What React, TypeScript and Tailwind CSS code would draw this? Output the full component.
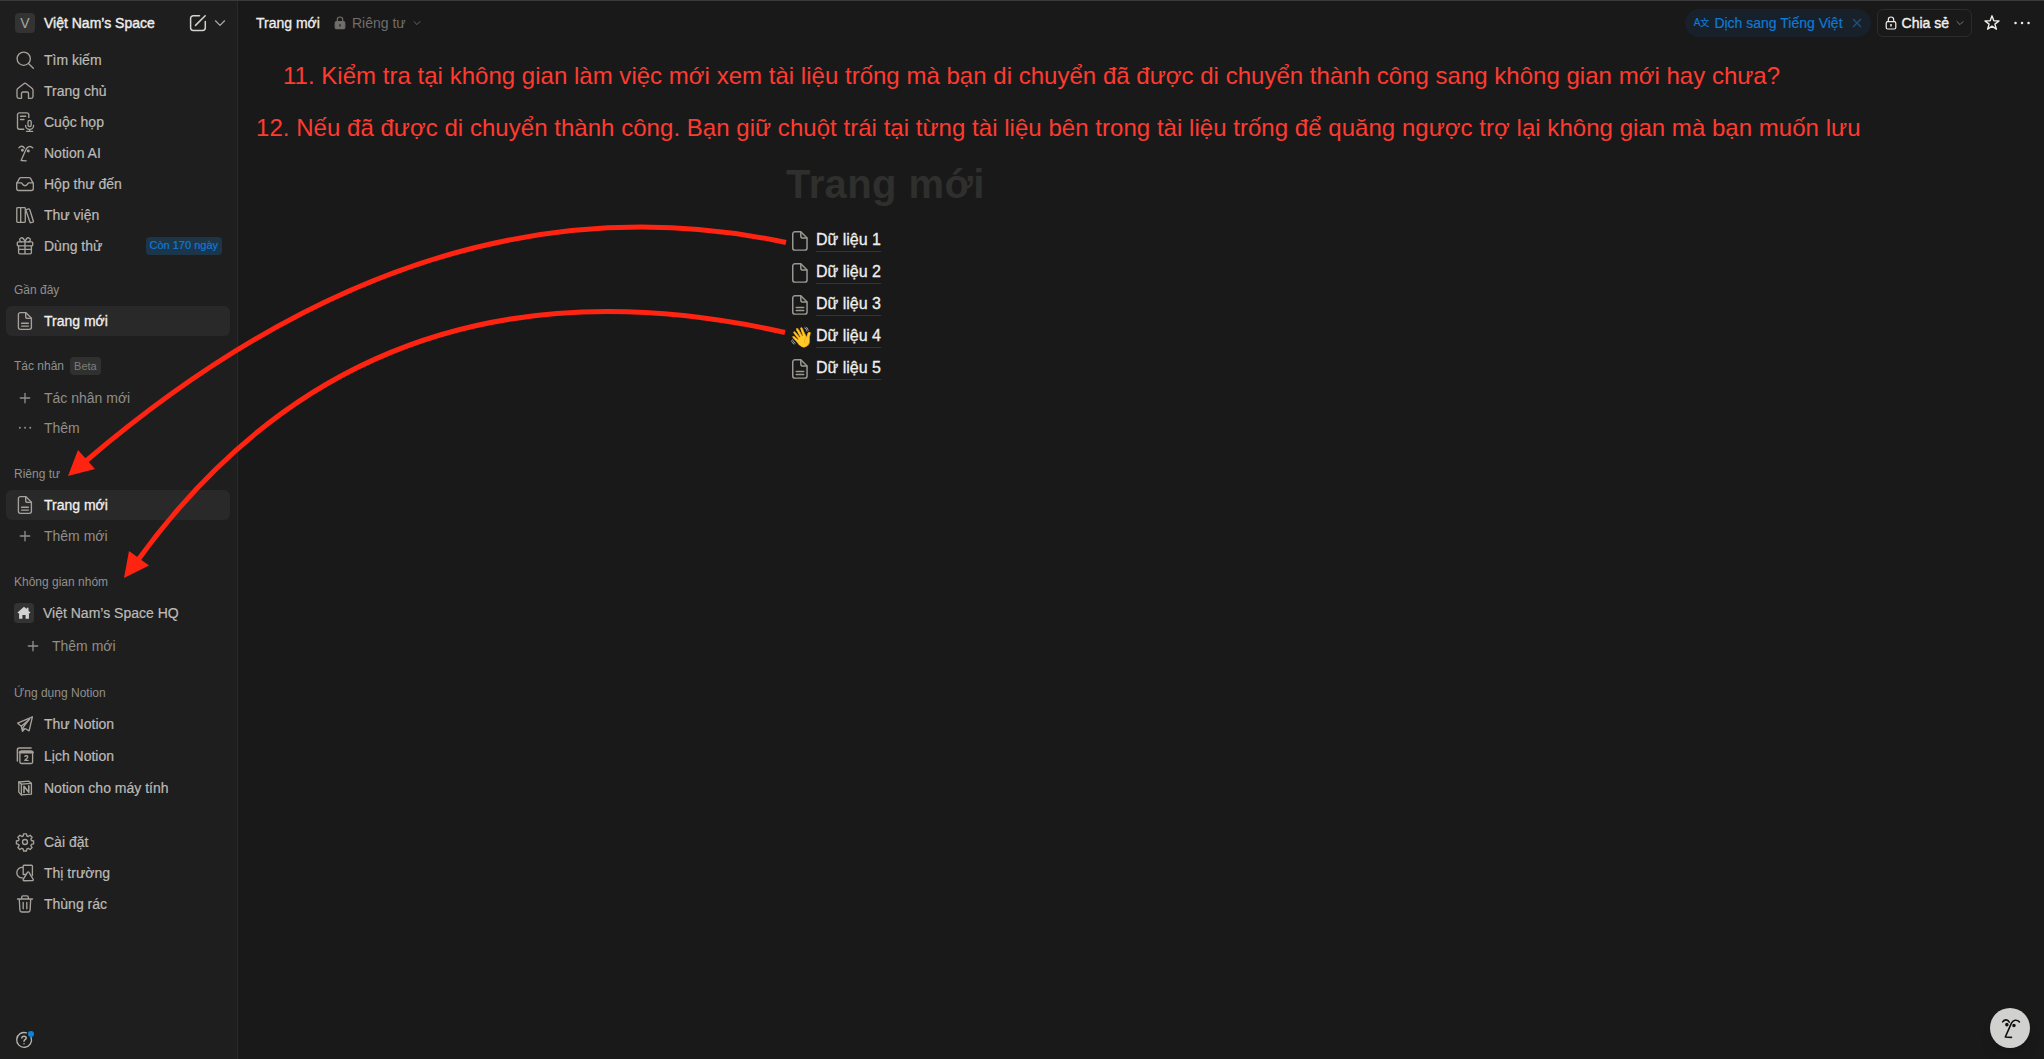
import React from "react";

type IconProps = { children: React.ReactNode; className?: string };

const Icon: React.FC<IconProps> = ({ children, className = "w-5 h-5" }) => (
  <svg
    viewBox="0 0 20 20"
    className={`shrink-0 ${className}`}
    fill="none"
    stroke="currentColor"
    strokeWidth="1.35"
    strokeLinecap="round"
    strokeLinejoin="round"
  >
    {children}
  </svg>
);

const PageIcon: React.FC<{ lines?: boolean; className?: string }> = ({ lines, className }) => (
  <Icon className={className}>
    <path d="M5.4 1.6h5.3l5.7 5.7v9a2 2 0 0 1-2 2H5.4a2 2 0 0 1-2-2V3.6a2 2 0 0 1 2-2Z" />
    <path d="M10.7 1.8v3.6a1.9 1.9 0 0 0 1.9 1.9h3.6" />
    {lines && <path d="M6.6 12.2h6.8M6.6 15.1h6.8" />}
  </Icon>
);

const PlusIcon = () => (
  <Icon><path d="M10 5.3v9.4M5.3 10h9.4" /></Icon>
);

const FaceIcon: React.FC<{ className?: string }> = ({ className }) => (
  <Icon className={className}>
    <path d="M3.9 4.9c1.5-2.2 4.2-2.3 5.5.2M17.8 4.9c-2.2-2.3-5.1-1.6-6.6 1L6.1 17.5l5.1.3" />
    <circle cx="7.4" cy="7.2" r=".8" fill="currentColor" />
    <circle cx="13.3" cy="7.9" r=".8" fill="currentColor" />
  </Icon>
);

const Chevron: React.FC<{ className?: string }> = ({ className }) => (
  <svg viewBox="0 0 10 10" className={`shrink-0 ${className}`} fill="none" stroke="currentColor" strokeWidth="1.1" strokeLinecap="round" strokeLinejoin="round">
    <path d="M1.2 3.2 5 7l3.8-3.8" />
  </svg>
);

const mainItems = [
  {
    label: "Tìm kiếm",
    icon: <Icon><circle cx="8.7" cy="8.7" r="6.6" /><path d="m13.5 13.5 4.8 4.8" /></Icon>,
  },
  {
    label: "Trang chủ",
    icon: (
      <Icon>
        <path d="M2 9.2c0-.7.3-1.3.8-1.7l6-4.8a2 2 0 0 1 2.4 0l6 4.8c.5.4.8 1 .8 1.7v6.3a1.8 1.8 0 0 1-1.8 1.8h-2.7v-5a1.3 1.3 0 0 0-1.3-1.3H7.8a1.3 1.3 0 0 0-1.3 1.3v5H3.8A1.8 1.8 0 0 1 2 15.5Z" />
      </Icon>
    ),
  },
  {
    label: "Cuộc họp",
    icon: (
      <Icon>
        <path d="M8.8 17.2H4.5a2 2 0 0 1-2-2V2.8a2 2 0 0 1 2-2h7.3a2 2 0 0 1 2 2v2.7M5.5 4.2h5.2M5.5 7.5h3.5" />
        <rect x="13" y="8.3" width="3.2" height="6.2" rx="1.6" />
        <path d="M10.6 13.4a4 4 0 0 0 8 0M14.6 17.4v2M11.6 19.4h6" />
      </Icon>
    ),
  },
  { label: "Notion AI", icon: <FaceIcon /> },
  {
    label: "Hộp thư đến",
    icon: (
      <Icon>
        <path d="M1.7 9.5 4.3 4.6a2 2 0 0 1 1.8-1h7.8a2 2 0 0 1 1.8 1l2.6 4.9v5a2 2 0 0 1-2 2H3.7a2 2 0 0 1-2-2Z" />
        <path d="M1.7 8.8h4.7c.8 0 .9 2.9 3.6 2.9s2.8-2.9 3.6-2.9h4.7" />
      </Icon>
    ),
  },
  {
    label: "Thư viện",
    icon: (
      <Icon>
        <path d="M1.8 3.4a.8.8 0 0 1 .8-.8h2.3a.8.8 0 0 1 .8.8v13.2a.8.8 0 0 1-.8.8H2.6a.8.8 0 0 1-.8-.8ZM5.7 2.6h3.8a.8.8 0 0 1 .8.8v13.2a.8.8 0 0 1-.8.8H5.5" />
        <path d="m11.4 4.6 2.3-.7a.8.8 0 0 1 1 .6l3.7 11.7a.8.8 0 0 1-.5 1l-1.9.5a.8.8 0 0 1-1-.5L11 5.5a.8.8 0 0 1 .4-.9Z" />
      </Icon>
    ),
  },
  {
    label: "Dùng thử",
    badge: "Còn 170 ngày",
    icon: (
      <Icon>
        <rect x="2.3" y="5.8" width="15.4" height="4" rx=".9" />
        <path d="M3.6 9.8v6.8a1.3 1.3 0 0 0 1.3 1.3h10.2a1.3 1.3 0 0 0 1.3-1.3V9.8M10 5.8v12.1M10 5.8C8.8 2.3 7.500 1.6 6.2 1.8c-2.2.4-2 3.7.3 4M10 5.8c1.2-3.5 2.5-4.2 3.8-4 2.2.4 2 3.7-.3 4M3.800 13.400h12.400" />
      </Icon>
    ),
  },
];

const appItems = [
  {
    label: "Thư Notion",
    icon: (
      <Icon>
        <path d="M17.4 2.8 2.7 9.2l3.6 3.1 1.2 5 2.500-2.800 4.100 2.300ZM6.3 12.3l8.4-7.4M7.5 17.3l.8-4.2 6.4-8.2" />
      </Icon>
    ),
  },
  {
    label: "Lịch Notion",
    icon: (
      <Icon>
        <path d="M2.4 15V3.8a1.8 1.8 0 0 1 1.8-1.8h11.9" strokeWidth="1.5" />
        <rect x="4.9" y="4.8" width="12.7" height="12.7" rx="1.6" />
        <path d="M5 6.2h12.5" strokeWidth="2.4" />
        <path d="M9.8 10.3c.8-.9 3-.7 3 .6 0 1.2-2.1 2-3 3.5h3.2" />
      </Icon>
    ),
  },
  {
    label: "Notion cho máy tính",
    icon: (
      <Icon>
        <path d="M3.8 4 13.9 3.2l2.500 2v11l-10.100.7-2.500-2.800Z" />
        <path d="M3.8 4 6.4 6.1l10-.7M6.4 6.1v10.600" />
        <path d="M9 14.500V8.300l4.800 6V7.900" strokeWidth="1.6" />
      </Icon>
    ),
  },
];

const footerItems = [
  {
    label: "Cài đặt",
    icon: (
      <Icon>
        <circle cx="10" cy="10" r="2.5" />
        <path d="M8.6 1.8h2.8l.5 2.2 1.3.5 1.9-1.2 2 2-1.2 1.9.5 1.3 2.2.5v2.8l-2.2.5-.5 1.3 1.2 1.9-2 2-1.9-1.2-1.3.5-.5 2.2H8.6l-.5-2.2-1.3-.5-1.9 1.2-2-2 1.2-1.9-.5-1.3-2.2-.5V9l2.2-.5.5-1.3-1.2-1.9 2-2 1.9 1.2 1.3-.5Z" />
      </Icon>
    ),
  },
  {
    label: "Thị trường",
    icon: (
      <Icon>
        <path d="M7.6 14.9a5.300 5.300 0 1 1 .4-10.500M8.200 11.500V3.100a.9.9 0 0 1 .9-.9h7.400a.9.9 0 0 1 .9.9v9.400M8.200 11.500h2.700" />
        <path d="M12.400 9.400a.9.9 0 0 1 1.6 0l4.200 7a.9.9 0 0 1-.8 1.300H9a.9.9 0 0 1-.8-1.300Z" />
      </Icon>
    ),
  },
  {
    label: "Thùng rác",
    icon: (
      <Icon>
        <path d="M2.5 5h15M6.7 5V3.2a1.300 1.300 0 0 1 1.3-1.300h4a1.300 1.300 0 0 1 1.300 1.300V5M4.300 5l.6 11.300a1.800 1.800 0 0 0 1.800 1.700h6.600a1.800 1.800 0 0 0 1.800-1.700L15.700 5M8.200 8.300v6.400M11.800 8.300v6.400" />
      </Icon>
    ),
  },
];

const documents = [
  { label: "Dữ liệu 1", kind: "empty" },
  { label: "Dữ liệu 2", kind: "empty" },
  { label: "Dữ liệu 3", kind: "text" },
  { label: "Dữ liệu 4", kind: "wave" },
  { label: "Dữ liệu 5", kind: "text" },
];

type RowProps = {
  label: string;
  icon: React.ReactNode;
  badge?: string;
  active?: boolean;
  muted?: boolean;
  className?: string;
};

const Row: React.FC<RowProps> = ({ label, icon, badge, active, muted, className = "h-[31px] pl-[9px]" }) => (
  <div
    className={`flex items-center gap-[9px] rounded-md text-sm ${className} ${
      active ? "bg-[#292929] text-[#f0efed] [-webkit-text-stroke:0.3px]" : muted ? "text-[#8f8e8b]" : "text-[#bcbab6] [-webkit-text-stroke:0.2px]"
    }`}
  >
    <span className={`flex ${muted ? "" : "text-[#a6a29b]"}`}>{icon}</span>
    <span className="whitespace-nowrap">{label}</span>
    {badge && (
      <span className="mr-2 ml-auto h-[18px] rounded bg-[#1d3549] px-1 text-[11px] leading-[17px] whitespace-nowrap text-[#0d7ad6]">{badge}</span>
    )}
  </div>
);

const SectionLabel: React.FC<{ children: React.ReactNode; className?: string }> = ({ children, className }) => (
  <div className={`flex h-5 items-center pl-2 text-xs text-[#91908d] ${className}`}>{children}</div>
);

const Sidebar = () => (
  <aside className="flex w-[238px] shrink-0 flex-col border-r border-[#2a2a2a] bg-[#1e1e1e] pt-[7px] pr-[7px] pl-1.5">
    <div className="flex h-[30px] items-center pl-[9px] text-sm">
      <span className="flex h-5 w-5 items-center justify-center rounded bg-[#333] text-[#a7a6a3]">V</span>
      <span className="ml-[9px] text-[#eeedeb] [-webkit-text-stroke:0.4px]">Việt Nam’s Space</span>
      <span className="ml-auto flex items-center gap-1.5 pr-1 text-[#d4d3cf]">
        <Icon className="h-5 w-5">
          <path d="M11.5 2.7H5.3a2.700 2.700 0 0 0-2.700 2.700v9.300a2.700 2.700 0 0 0 2.700 2.700h9.300a2.700 2.700 0 0 0 2.700-2.700V8.500M7.500 12.400l9.700-9.700" strokeWidth="1.5" />
        </Icon>
        <Chevron className="h-3 w-3 text-[#a6a5a1]" />
      </span>
    </div>

    <nav className="mt-1.5">
      {mainItems.map((item) => (
        <Row key={item.label} {...item} />
      ))}
    </nav>

    <SectionLabel className="mt-[19px]">Gần đây</SectionLabel>
    <Row label="Trang mới" icon={<PageIcon lines />} active className="mt-1.5 h-[30px] pl-[9px]" />

    <SectionLabel className="mt-5">
      Tác nhân
      <span className="ml-1.5 rounded bg-[#30302f] px-1 text-[11px] leading-[18px] text-[#7f7e7b]">Beta</span>
    </SectionLabel>
    <Row label="Tác nhân mới" icon={<PlusIcon />} muted className="mt-[7px] h-[30px] pl-[9px]" />
    <Row
      label="Thêm"
      muted
      className="h-[30px] pl-[9px]"
      icon={
        <Icon><path d="M4.8 9.8h.1M10 9.8h.1M15.2 9.8h.1" strokeWidth="1.9" /></Icon>
      }
    />

    <SectionLabel className="mt-[21px]">Riêng tư</SectionLabel>
    <Row label="Trang mới" icon={<PageIcon lines />} active className="mt-1.5 h-[30px] pl-[9px]" />
    <Row label="Thêm mới" icon={<PlusIcon />} muted />

    <SectionLabel className="mt-[21px]">Không gian nhóm</SectionLabel>
    <Row
      label="Việt Nam’s Space HQ"
      className="mt-[5px] h-[31px] pl-2"
      icon={
        <span className="flex h-5 w-5 items-center justify-center rounded bg-[#333] text-[#d3d3d3]">
          <svg viewBox="0 0 14 14" className="h-3.5 w-3.5" fill="currentColor">
            <path d="M7 .8 9.6 3.1V1.7h1.9v3.1L13.5 6.6l-.8.9-.8-.6v5.900H8.600V9H5.400v3.800H2.100V6.900l-.8.6-.8-.9Z" />
          </svg>
        </span>
      }
    />
    <Row label="Thêm mới" icon={<PlusIcon />} muted className="mt-px h-[33px] pl-[17px]" />

    <SectionLabel className="mt-[21px]">Ứng dụng Notion</SectionLabel>
    <div className="mt-[5px]">
      {appItems.map((item) => (
        <Row key={item.label} {...item} className="h-8 pl-[9px]" />
      ))}
    </div>

    <div className="mt-[22px]">
      {footerItems.map((item) => (
        <Row key={item.label} {...item} />
      ))}
    </div>

    <div className="relative mt-auto mb-[9px] ml-2 h-5 w-5 text-[#b5b3af]">
      <Icon>
        <path d="M12.5 2.900A7.400 7.400 0 1 0 17.100 7.500" />
        <path d="M7.800 7.900c.3-2.300 4.400-2.300 4.400.1 0 1.600-2.200 1.700-2.200 3.300M10 13.700v.1" strokeWidth="1.5" />
      </Icon>
      <span className="absolute top-px right-0 h-1.5 w-1.5 rounded-full bg-[#0a84e0]" />
    </div>
  </aside>
);

const TopBar = () => (
  <header className="flex h-11 shrink-0 items-center pr-3 pl-[18px] text-sm">
    <span className="text-[#f0efed] [-webkit-text-stroke:0.3px]">Trang mới</span>
    <span className="ml-3.5 flex items-center text-[#6f6e6b]">
      <svg viewBox="0 0 12 14" className="h-3.5 w-3" fill="none" stroke="currentColor" strokeWidth="1.2">
        <path d="M3.3 6V3.7a2.700 2.700 0 0 1 5.400 0V6" />
        <path d="M2.700 5.700h6.600a1.500 1.500 0 0 1 1.500 1.500v4a1.500 1.500 0 0 1-1.500 1.500H2.700a1.500 1.500 0 0 1-1.500-1.500v-4a1.500 1.500 0 0 1 1.500-1.500Z" fill="currentColor" />
        <path d="M6 8.200v2.300" stroke="#191919" />
      </svg>
      <span className="ml-1.5">Riêng tư</span>
      <Chevron className="ml-[7px] h-2 w-2" />
    </span>

    <div className="ml-auto flex items-center">
      <div className="flex h-7 items-center rounded-full bg-[#18212a] pr-[9px] pb-px pl-[9px] text-[#0d7ad6]">
        <span className="flex items-baseline font-['Liberation_Sans','Noto_Sans_CJK_SC',sans-serif] text-[10px] leading-none [-webkit-text-stroke:0.2px]">
          A<span className="text-[9px]">文</span>
        </span>
        <span className="ml-[5px] [-webkit-text-stroke:0.2px]">Dịch sang Tiếng Việt</span>
        <svg viewBox="0 0 10 10" className="ml-[9px] h-2.5 w-2.5 text-[#1e527b]" stroke="currentColor" strokeWidth="1.3">
          <path d="m1 1 8 8M9 1 1 9" />
        </svg>
      </div>
      <div className="ml-1.5 flex h-7 items-center rounded-md border border-[#2c2c2c] pr-[7px] pl-[7px] text-[#f0efed]">
        <svg viewBox="0 0 12 14" className="h-3.5 w-3" fill="none" stroke="currentColor" strokeWidth="1.2">
          <path d="M3.300 5.700V3.700a2.700 2.700 0 0 1 5.400 0v2" />
          <rect x="1.200" y="5.700" width="9.600" height="7.300" rx="1.500" />
          <path d="M6 8v2.500" strokeWidth="1.500" />
        </svg>
        <span className="ml-[5px] [-webkit-text-stroke:0.4px]">Chia sẻ</span>
        <Chevron className="ml-[7px] h-2 w-2 text-[#8a8986]" />
      </div>
      <Icon className="ml-2.5 h-5 w-5 text-[#eeedeb]">
        <path d="m10 2.800 1.800 4.900 5.200.2-4.100 3.200 1.500 5.100-4.400-3-4.400 3 1.500-5.100L3 7.900l5.200-.2Z" strokeWidth="1.400" />
      </Icon>
      <Icon className="ml-2.5 h-5 w-5 text-[#eeedeb]">
        <path d="M3.500 10h.1M10 10h.1M16.500 10h.1" strokeWidth="2.400" />
      </Icon>
    </div>
  </header>
);

const App: React.FC = () => {
  return (
    <div className="relative flex h-screen w-full overflow-hidden border-t border-[#3a3a3a] bg-[#191919] font-['Liberation_Sans',Arial,sans-serif]">
      <Sidebar />
      <main className="flex min-w-0 flex-1 flex-col">
        <TopBar />
        <div className="text-2xl whitespace-nowrap text-[#ff3b30]">
          <p className="mt-[15px] ml-[45px] leading-8 tracking-[0.02px]">11. Kiểm tra tại không gian làm việc mới xem tài liệu trống mà bạn di chuyển đã được di chuyển thành công sang không gian mới hay chưa?</p>
          <p className="mt-5 ml-[18px] leading-8 tracking-[0.036px]">12. Nếu đã được di chuyển thành công. Bạn giữ chuột trái tại từng tài liệu bên trong tài liệu trống để quăng ngược trợ lại không gian mà bạn muốn lưu</p>
        </div>
        <h1 className="mt-4 ml-[548px] text-[40px] leading-[48px] font-bold tracking-[0.4px] text-[#2f2f2e]">Trang mới</h1>
        <ul className="mt-4 ml-[551px]">
          {documents.map((doc) => (
            <li key={doc.label} className="flex h-8 items-center gap-[5px] text-base">
              <span className="flex w-[22px] justify-center pt-0.5 text-[#9b9892]">
                {doc.kind === "wave" ? <span className="pl-0.5 text-xl leading-none">👋</span> : <PageIcon lines={doc.kind === "text"} className="h-[22px] w-[22px]" />}
              </span>
              <span className="border-b border-[#343434] leading-[22px] text-[#f0efed] [-webkit-text-stroke:0.3px]">{doc.label}</span>
            </li>
          ))}
        </ul>
      </main>

      {/* arrows from the documents to the sidebar sections */}
      <svg className="pointer-events-none absolute -top-px left-0" width="2044" height="1059" fill="none" stroke="#ff2412" strokeWidth="5">
        <path d="M786 242.500Q430 167 86 461" />
        <path d="M68 476 78 450 95 469Z" fill="#ff2412" stroke="none" />
        <path d="M785 332.500Q370 239.500 138 560" />
        <path d="M124 578 129 551 149 565.500Z" fill="#ff2412" stroke="none" />
      </svg>

      <button className="absolute right-[14px] bottom-[11px] flex h-10 w-10 items-center justify-center rounded-full bg-[#d1d1cf] text-[#111] shadow-lg">
        <FaceIcon className="h-6 w-6" />
      </button>
    </div>
  );
};

export default App;
